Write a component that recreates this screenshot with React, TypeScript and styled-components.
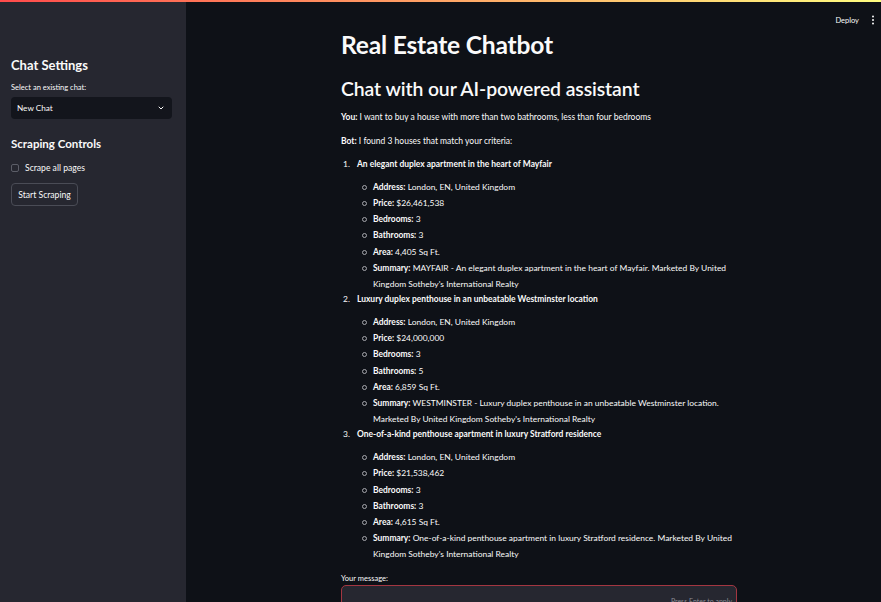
import React from "react";
import styled, { createGlobalStyle } from "styled-components";

const Global = createGlobalStyle`
  html, body { margin: 0; padding: 0; background: #0e1117; }
  body { font-family: Lato, "Noto Sans", sans-serif; color: #fafafa; }
  * { box-sizing: border-box; }
`;

const Page = styled.div`
  position: relative;
  width: 881px;
  height: 602px;
  overflow: hidden;
  display: flex;
  background: #0e1117;
`;

const Decoration = styled.div`
  position: absolute;
  top: 0;
  left: 0;
  right: 0;
  height: 2px;
  background: linear-gradient(90deg, #ff4b4b, #fffd80);
  z-index: 5;
`;

const Sidebar = styled.aside`
  width: 186px;
  flex-shrink: 0;
  background: #262730;
  padding: 56px 14px 0 11px;
  display: flex;
  flex-direction: column;
`;

const SideHeading = styled.h3<{ $size: number; $mt: number }>`
  margin: ${(p) => p.$mt}px 0 0;
  font-size: ${(p) => p.$size}px;
  line-height: 18px;
  font-weight: 700;
  color: #fafafa;
`;

const Label = styled.div<{ $mt: number }>`
  margin-top: ${(p) => p.$mt}px;
  font-size: 7.5px;
  line-height: 10px;
  color: #fafafa;
`;

const Select = styled.div`
  margin-top: 4px;
  height: 22px;
  width: 161px;
  border-radius: 4px;
  background: #13151c;
  display: flex;
  align-items: center;
  justify-content: space-between;
  padding: 0 7px 0 6px;
  font-size: 8.2px;
  color: #fafafa;
`;

const CheckRow = styled.label`
  margin-top: 10px;
  display: flex;
  align-items: center;
  gap: 6px;
  height: 10px;
  font-size: 8.6px;
  color: #fafafa;
`;

const Box = styled.span`
  width: 8px;
  height: 8px;
  border: 1px solid #5c5e68;
  border-radius: 2px;
  background: #262730;
`;

const Button = styled.button`
  margin-top: 10px;
  width: 67px;
  height: 23px;
  border: 1px solid #4a4c56;
  border-radius: 4px;
  background: #262730;
  color: #fafafa;
  font-family: inherit;
  font-size: 8.6px;
  padding: 0;
`;

const Main = styled.main`
  position: relative;
  flex: 1;
  padding: 30px 0 0 155px;
`;

const TopBar = styled.div`
  position: absolute;
  top: 15px;
  right: 6px;
  display: flex;
  align-items: center;
  gap: 12px;
  font-size: 7.5px;
  color: #fafafa;
`;

const Content = styled.div`
  width: 396px;
`;

const Title = styled.h1`
  margin: 0;
  font-size: 24.6px;
  line-height: 30px;
  font-weight: 700;
  letter-spacing: -0.2px;
`;

const Subtitle = styled.h2`
  margin: 16px 0 0;
  font-size: 19.4px;
  line-height: 26px;
  font-weight: 600;
  letter-spacing: -0.1px;
`;

const Para = styled.p<{ $mt: number }>`
  margin: ${(p) => p.$mt}px 0 0;
  font-size: 8.5px;
  line-height: 16px;
`;

const OList = styled.ol`
  margin: 7px 0 0;
  padding: 0;
  list-style: none;
  counter-reset: house;
  font-size: 8.45px;
  line-height: 16px;
`;

const Item = styled.li`
  position: relative;
  padding-left: 16px;
  counter-increment: house;
  &::before {
    content: counter(house) ".";
    position: absolute;
    left: 2px;
    top: 0;
  }
`;

const ItemTitle = styled.strong`
  font-weight: 700;
`;

const SubList = styled.ul`
  margin: 7px 0 -1px;
  padding: 0 0 0 16px;
  list-style: none;
`;

const SubItem = styled.li`
  position: relative;
  line-height: 16.15px;
  &::before {
    content: "";
    position: absolute;
    left: -11px;
    top: 6px;
    width: 3px;
    height: 3px;
    border: 1px solid #a6a7ad;
    border-radius: 50%;
  }
`;

const InputLabel = styled.div`
  margin-top: 13px;
  font-size: 7.5px;
  line-height: 10px;
`;

const TextArea = styled.div`
  position: relative;
  margin-top: 1px;
  height: 40px;
  border: 1px solid #a33641;
  border-radius: 5px;
  background: #262730;
`;

const Hint = styled.span`
  position: absolute;
  right: 4px;
  top: 11px;
  font-size: 7px;
  color: #8c8d94;
`;

type House = {
  title: string;
  address: string;
  price: string;
  beds: string;
  baths: string;
  area: string;
  summary: string;
};

const houses: House[] = [
  {
    title: "An elegant duplex apartment in the heart of Mayfair",
    address: "London, EN, United Kingdom",
    price: "$26,461,538",
    beds: "3",
    baths: "3",
    area: "4,405 Sq Ft.",
    summary:
      "MAYFAIR - An elegant duplex apartment in the heart of Mayfair. Marketed By United Kingdom Sotheby's International Realty",
  },
  {
    title: "Luxury duplex penthouse in an unbeatable Westminster location",
    address: "London, EN, United Kingdom",
    price: "$24,000,000",
    beds: "3",
    baths: "5",
    area: "6,859 Sq Ft.",
    summary:
      "WESTMINSTER - Luxury duplex penthouse in an unbeatable Westminster location. Marketed By United Kingdom Sotheby's International Realty",
  },
  {
    title: "One-of-a-kind penthouse apartment in luxury Stratford residence",
    address: "London, EN, United Kingdom",
    price: "$21,538,462",
    beds: "3",
    baths: "3",
    area: "4,615 Sq Ft.",
    summary:
      "One-of-a-kind penthouse apartment in luxury Stratford residence. Marketed By United Kingdom Sotheby's International Realty",
  },
];

const Chevron = () => (
  <svg width="8" height="8" viewBox="0 0 24 24" fill="none" stroke="#fafafa" strokeWidth="3" strokeLinecap="round" strokeLinejoin="round">
    <polyline points="6 9 12 15 18 9" />
  </svg>
);

const Dots = () => (
  <svg width="4" height="10" viewBox="0 0 4 10">
    <circle cx="2" cy="1.5" r="1" fill="#fafafa" />
    <circle cx="2" cy="5" r="1" fill="#fafafa" />
    <circle cx="2" cy="8.5" r="1" fill="#fafafa" />
  </svg>
);

export default function App() {
  return (
    <>
      <Global />
      <Page>
        <Decoration />
        <Sidebar>
          <SideHeading $size={13} $mt={0}>Chat Settings</SideHeading>
          <Label $mt={9}>Select an existing chat:</Label>
          <Select>
            <span>New Chat</span>
            <Chevron />
          </Select>
          <SideHeading $size={11.5} $mt={16}>Scraping Controls</SideHeading>
          <CheckRow>
            <Box />
            <span>Scrape all pages</span>
          </CheckRow>
          <Button>Start Scraping</Button>
        </Sidebar>
        <Main>
          <TopBar>
            <span>Deploy</span>
            <Dots />
          </TopBar>
          <Content>
            <Title>Real Estate Chatbot</Title>
            <Subtitle>Chat with our AI-powered assistant</Subtitle>
            <Para $mt={7}>
              <strong>You:</strong> I want to buy a house with more than two bathrooms, less than four bedrooms
            </Para>
            <Para $mt={8}>
              <strong>Bot:</strong> I found 3 houses that match your criteria:
            </Para>
            <OList>
              {houses.map((h) => (
                <Item key={h.title}>
                  <ItemTitle>{h.title}</ItemTitle>
                  <SubList>
                    <SubItem><strong>Address:</strong> {h.address}</SubItem>
                    <SubItem><strong>Price:</strong> {h.price}</SubItem>
                    <SubItem><strong>Bedrooms:</strong> {h.beds}</SubItem>
                    <SubItem><strong>Bathrooms:</strong> {h.baths}</SubItem>
                    <SubItem><strong>Area:</strong> {h.area}</SubItem>
                    <SubItem><strong>Summary:</strong> {h.summary}</SubItem>
                  </SubList>
                </Item>
              ))}
            </OList>
            <InputLabel>Your message:</InputLabel>
            <TextArea>
              <Hint>Press Enter to apply</Hint>
            </TextArea>
          </Content>
        </Main>
      </Page>
    </>
  );
}
